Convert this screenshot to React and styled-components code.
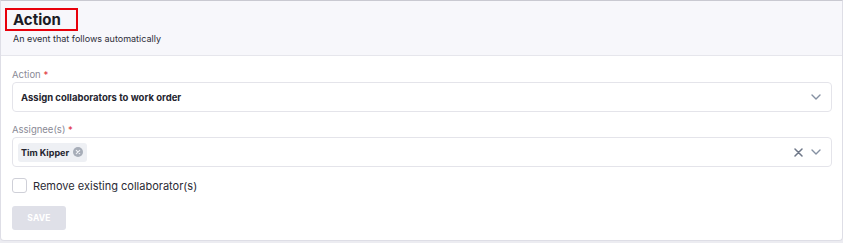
import React from "react";
import styled, { createGlobalStyle } from "styled-components";

const GlobalStyle = createGlobalStyle`
  body {
    margin: 0;
    background: #ececf1;
    font-family: Inter, "Noto Sans", Arial, sans-serif;
  }
`;

const Card = styled.div`
  box-sizing: border-box;
  width: 843px;
  height: 241px;
  background: #ffffff;
  border: 1px solid #dedee6;
  border-top-color: #c9c9d1;
  border-radius: 0 0 4px 4px;
  overflow: hidden;
`;

const Header = styled.div`
  box-sizing: border-box;
  height: 55px;
  background: #f7f7fb;
  border-bottom: 1px solid #e6e6ec;
  padding: 7px 0 0 4px;
`;

const TitleBox = styled.div`
  display: inline-block;
  box-sizing: border-box;
  width: 73px;
  height: 23px;
  border: 2px solid #e8000b;
  padding: 1px 0 0 6px;
  font-size: 15px;
  font-weight: 700;
  color: #1b1b24;
  line-height: 18px;
`;

const Subtitle = styled.div`
  font-size: 9px;
  color: #2d2d38;
  margin: 2px 0 0 8px;
`;

const Body = styled.div`
  padding: 12px 10px 0 11px;
  display: flex;
  flex-direction: column;
`;

const Label = styled.div`
  font-size: 9.5px;
  color: #8a8a96;
  height: 13px;
  line-height: 13px;
  margin-bottom: 1px;
  span {
    color: #e0313d;
  }
`;

const Select = styled.div`
  box-sizing: border-box;
  height: 30px;
  border: 1px solid #e4e4ea;
  border-radius: 4px;
  display: flex;
  align-items: center;
  padding: 0 10px 0 ${(p) => (p.$chips ? "5px" : "8px")};
  margin-bottom: ${(p) => p.$gap || 0}px;
`;

const Value = styled.div`
  flex: 1;
  font-size: 9.5px;
  font-weight: 700;
  color: #24242e;
`;

const Chips = styled.div`
  flex: 1;
  display: flex;
`;

const Chip = styled.div`
  display: flex;
  align-items: center;
  gap: 4px;
  height: 19px;
  padding: 0 4px 0 3px;
  background: #eef0f4;
  border-radius: 3px;
  font-size: 9px;
  font-weight: 700;
  color: #24242e;
`;

const Icons = styled.div`
  display: flex;
  align-items: center;
  gap: 8px;
  color: #7e8797;
`;

const CheckRow = styled.label`
  display: flex;
  align-items: center;
  gap: 6px;
  height: 15px;
  margin-top: 11px;
  font-size: 11px;
  color: #2a2a34;
`;

const Box = styled.span`
  box-sizing: border-box;
  width: 15px;
  height: 15px;
  border: 1px solid #cfd0d8;
  border-radius: 3px;
  background: #fff;
`;

const SaveButton = styled.button`
  display: block;
  margin-top: 13px;
  width: 54px;
  height: 24px;
  border: none;
  border-radius: 3px;
  background: #dfe0e8;
  color: #ffffff;
  font-family: inherit;
  font-size: 8.5px;
  font-weight: 700;
  letter-spacing: 0.2px;
  padding: 0;
`;

const Chevron = () => (
  <svg width="10" height="6" viewBox="0 0 10 6">
    <path d="M1 1l4 4 4-4" fill="none" stroke="#8590a2" strokeWidth="1.4" strokeLinecap="round" strokeLinejoin="round" />
  </svg>
);

const Cross = () => (
  <svg width="9" height="9" viewBox="0 0 9 9">
    <path d="M1 1l7 7M8 1l-7 7" fill="none" stroke="#6e7788" strokeWidth="1.5" strokeLinecap="round" />
  </svg>
);

const ChipRemove = () => (
  <svg width="10" height="10" viewBox="0 0 10 10">
    <circle cx="5" cy="5" r="5" fill="#a7adb8" />
    <path d="M3.3 3.3l3.4 3.4M6.7 3.3l-3.4 3.4" stroke="#eef0f4" strokeWidth="1.2" strokeLinecap="round" />
  </svg>
);

export default function App() {
  return (
    <>
      <GlobalStyle />
      <Card>
        <Header>
          <TitleBox>Action</TitleBox>
          <Subtitle>An event that follows automatically</Subtitle>
        </Header>
        <Body>
          <Label>
            Action <span>*</span>
          </Label>
          <Select $gap={11}>
            <Value>Assign collaborators to work order</Value>
            <Icons>
              <Chevron />
            </Icons>
          </Select>
          <Label>
            Assignee(s) <span>*</span>
          </Label>
          <Select $chips>
            <Chips>
              <Chip>
                Tim Kipper
                <ChipRemove />
              </Chip>
            </Chips>
            <Icons>
              <Cross />
              <Chevron />
            </Icons>
          </Select>
          <CheckRow>
            <Box />
            Remove existing collaborator(s)
          </CheckRow>
          <SaveButton>SAVE</SaveButton>
        </Body>
      </Card>
    </>
  );
}
